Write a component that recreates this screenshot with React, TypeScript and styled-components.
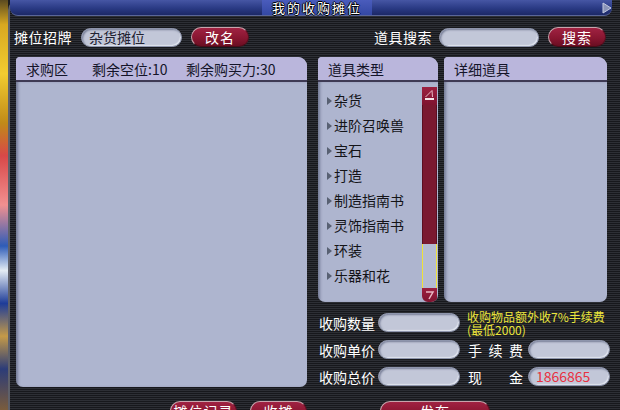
import styled, { createGlobalStyle } from "styled-components";

const GlobalStyle = createGlobalStyle`
  html, body {
    margin: 0;
    padding: 0;
    background: #1b1c21;
  }
  body {
    font-family: "Noto Sans CJK SC", "Noto Sans", sans-serif;
  }
`;

const Page = styled.div`
  display: flex;
  width: 620px;
  height: 410px;
  overflow: hidden;
`;

// strip of the game scene peeking out at the left
const SceneStrip = styled.div`
  width: 8px;
  flex: none;
  background: linear-gradient(
    180deg,
    #5a4a20 0%,
    #d8a820 6%,
    #f2cc30 18%,
    #c08a18 30%,
    #d84848 38%,
    #f29090 50%,
    #2e5cb8 60%,
    #e4ecf4 66%,
    #1e3c98 74%,
    #c49a48 82%,
    #2c3c78 90%,
    #7a5c3c 100%
  );
`;

const Frame = styled.div`
  flex: 1;
  display: flex;
  flex-direction: column;
  border-left: 2px solid #5e606a;
  border-top-left-radius: 10px;
  background: repeating-linear-gradient(
    180deg,
    #2d2f35 0px,
    #2d2f35 1px,
    #17181c 1px,
    #17181c 2px
  );
`;

const TitleBar = styled.div`
  height: 15px;
  margin-right: 8px;
  display: grid;
  grid-template-columns: 1fr auto 1fr;
  align-items: center;
  border-radius: 0 0 8px 8px;
  border-bottom: 1px solid #5a6698;
  background: linear-gradient(180deg, #4656a4 0%, #2a3a84 55%, #1c2866 100%);
  padding-left: 12px;
`;

const TitleBlock = styled.div`
  grid-column: 2;
  width: 110px;
  height: 15px;
  background: linear-gradient(180deg, #4a5cbc 0%, #3448a4 100%);
  color: #ffffff;
  font-size: 13px;
  line-height: 15px;
  letter-spacing: 2px;
  text-align: center;
  text-shadow: 1px 0 0 #000, -1px 0 0 #000, 0 1px 0 #000, 0 -1px 0 #000;
`;

const CornerIcon = styled.svg`
  grid-column: 3;
  justify-self: end;
`;

const TopRow = styled.div`
  display: flex;
  align-items: center;
  height: 20px;
  margin-top: 11px;
  padding: 0 14px 0 4px;
`;

const Label = styled.span`
  color: #ffffff;
  font-size: 14px;
  letter-spacing: 0.5px;
  white-space: nowrap;
`;

const SearchGroup = styled.div`
  display: flex;
  align-items: center;
  margin-left: auto;
`;

const Pill = styled.div<{ $width: number; $color?: string }>`
  width: ${({ $width }) => $width}px;
  height: 19px;
  box-sizing: border-box;
  border-radius: 10px;
  background: #c2c7d8;
  border: 1px solid #8e95ac;
  box-shadow: inset 1px 1px 2px #767d96, inset -1px -1px 1px #e6eaf2;
  color: ${({ $color }) => $color || "#222232"};
  font-size: 14px;
  line-height: 17px;
  padding-left: 7px;
  white-space: nowrap;
`;

const RedButton = styled.div<{ $width: number }>`
  width: ${({ $width }) => $width}px;
  height: 20px;
  box-sizing: border-box;
  flex: none;
  border-radius: 10px;
  background: linear-gradient(180deg, #a02242 0%, #86152f 60%, #6a0e22 100%);
  border: 1px solid #c8a4ac;
  border-bottom-color: #4a0c18;
  border-right-color: #5a1020;
  color: #ffffff;
  font-size: 14px;
  line-height: 18px;
  letter-spacing: 1px;
  text-align: center;
`;

const Main = styled.div`
  display: flex;
  margin-top: 10px;
  padding-left: 6px;
`;

const Panel = styled.div<{ $width: number; $height: number }>`
  width: ${({ $width }) => $width}px;
  height: ${({ $height }) => $height}px;
  flex: none;
  display: flex;
  flex-direction: column;
  overflow: hidden;
  border-radius: 4px 9px 7px 7px;
  background: #aeb5cf;
`;

const PanelHeader = styled.div`
  height: 23px;
  flex: none;
  display: flex;
  align-items: center;
  padding-left: 10px;
  background: #bab6dc;
  border-bottom: 2px solid #3e3a54;
  color: #141428;
  font-size: 14px;
  white-space: nowrap;
`;

const HeaderItem = styled.span<{ $width?: number }>`
  width: ${({ $width }) => ($width ? `${$width}px` : "auto")};
  flex: none;
`;

const PanelBody = styled.div`
  flex: 1;
  display: flex;
  box-shadow: inset 3px 0 3px -1px rgba(70, 74, 104, 0.55);
`;

const RightColumn = styled.div`
  display: flex;
  flex-direction: column;
  margin-left: 11px;
`;

const TopPanels = styled.div`
  display: flex;
  gap: 6px;
`;

const TypeList = styled.div`
  flex: 1;
  display: flex;
  flex-direction: column;
  padding-top: 5px;
`;

const TypeItem = styled.div`
  height: 25px;
  display: flex;
  align-items: center;
  gap: 2px;
  padding-left: 9px;
  color: #141418;
  font-size: 14px;
  white-space: nowrap;
`;

const Bullet = styled.span`
  width: 0;
  height: 0;
  border-left: 5px solid #586072;
  border-top: 4px solid transparent;
  border-bottom: 4px solid transparent;
  margin-top: 2px;
`;

const ScrollBar = styled.div`
  width: 15px;
  flex: none;
  display: flex;
  flex-direction: column;
  margin: 5px 1px 0 0;
`;

const ArrowButton = styled.div<{ $height: number; $down?: boolean }>`
  height: ${({ $height }) => $height}px;
  flex: none;
  display: flex;
  align-items: center;
  justify-content: center;
  background: linear-gradient(180deg, #9c2040 0%, #7e1430 100%);
  border-radius: ${({ $down }) => ($down ? "0 0 3px 6px" : "0")};
`;

const Track = styled.div`
  flex: 1;
  background: #7a1930;
  box-shadow: inset 1px 0 0 #5a0e20, inset -1px 0 0 #5a0e20;
`;

const Thumb = styled.div`
  height: 44px;
  flex: none;
  box-sizing: border-box;
  background: #b4bbd3;
  border-left: 1px solid #eee23a;
  border-right: 1px solid #eee23a;
`;

const Form = styled.div`
  display: grid;
  grid-template-columns: 60px 82px 68px 82px;
  grid-auto-rows: 19px;
  row-gap: 8px;
  margin-top: 11px;
`;

const FormLabel = styled.div`
  display: flex;
  align-items: center;
  padding-left: 1px;
  color: #ffffff;
  font-size: 14px;
  white-space: nowrap;
`;

const SpreadLabel = styled.div`
  width: 55px;
  margin-left: 8px;
  display: flex;
  align-items: center;
  justify-content: space-between;
  color: #ffffff;
  font-size: 14px;
`;

const Notice = styled.div`
  grid-column: 3 / span 2;
  margin: -3px 0 0 7px;
  color: #ece63c;
  font-size: 12px;
  line-height: 13px;
  white-space: nowrap;
`;

const NoticeLine = styled.div`
  height: 13px;
`;

const Footer = styled.div`
  display: flex;
  margin-top: 14px;
  padding-left: 160px;
`;

const FooterButton = styled(RedButton)<{ $gap: number }>`
  height: 22px;
  margin-left: ${({ $gap }) => $gap}px;
`;

const itemTypes = [
  "杂货",
  "进阶召唤兽",
  "宝石",
  "打造",
  "制造指南书",
  "灵饰指南书",
  "环装",
  "乐器和花",
];

const spread = (text: string) =>
  text.split("").map((ch, i) => <span key={i}>{ch}</span>);

export default function App() {
  return (
    <>
      <GlobalStyle />
      <Page>
        <SceneStrip />
        <Frame>
          <TitleBar>
            <TitleBlock>我的收购摊位</TitleBlock>
            <CornerIcon width="10" height="12" viewBox="0 0 10 12">
              <path d="M1 1 L9 6 L1 11 Z" fill="#8a94b8" stroke="#c4cae0" strokeWidth="1" />
            </CornerIcon>
          </TitleBar>

          <TopRow>
            <Label>摊位招牌</Label>
            <Pill $width={101} style={{ marginLeft: 9 }}>
              杂货摊位
            </Pill>
            <RedButton $width={58} style={{ marginLeft: 9 }}>
              改名
            </RedButton>
            <SearchGroup>
              <Label>道具搜索</Label>
              <Pill $width={100} style={{ marginLeft: 7 }} />
              <RedButton $width={58} style={{ marginLeft: 9 }}>
                搜索
              </RedButton>
            </SearchGroup>
          </TopRow>

          <Main>
            <Panel $width={291} $height={330}>
              <PanelHeader>
                <HeaderItem $width={66}>求购区</HeaderItem>
                <HeaderItem $width={94}>剩余空位:10</HeaderItem>
                <HeaderItem>剩余购买力:30</HeaderItem>
              </PanelHeader>
              <PanelBody />
            </Panel>

            <RightColumn>
              <TopPanels>
                <Panel $width={120} $height={245}>
                  <PanelHeader>道具类型</PanelHeader>
                  <PanelBody>
                    <TypeList>
                      {itemTypes.map((name) => (
                        <TypeItem key={name}>
                          <Bullet />
                          {name}
                        </TypeItem>
                      ))}
                    </TypeList>
                    <ScrollBar>
                      <ArrowButton $height={18}>
                        <svg width="15" height="18" viewBox="0 0 15 18">
                          <path d="M3.5 10 L10 3.5 L10.5 10" fill="none" stroke="#e8b8c4" strokeWidth="1" />
                          <rect x="3" y="11" width="9" height="2" fill="#f4e4e8" />
                        </svg>
                      </ArrowButton>
                      <Track />
                      <Thumb />
                      <ArrowButton $height={14} $down>
                        <svg width="15" height="14" viewBox="0 0 15 14">
                          <path d="M4 4 H11 L7 11" fill="none" stroke="#e8b8c4" strokeWidth="1.5" />
                        </svg>
                      </ArrowButton>
                    </ScrollBar>
                  </PanelBody>
                </Panel>
                <Panel $width={163} $height={245}>
                  <PanelHeader>详细道具</PanelHeader>
                  <PanelBody />
                </Panel>
              </TopPanels>

              <Form>
                <FormLabel>收购数量</FormLabel>
                <Pill $width={82} />
                <Notice>
                  <NoticeLine>收购物品额外收7%手续费</NoticeLine>
                  <NoticeLine>(最低2000)</NoticeLine>
                </Notice>

                <FormLabel>收购单价</FormLabel>
                <Pill $width={82} />
                <SpreadLabel>{spread("手续费")}</SpreadLabel>
                <Pill $width={82} />

                <FormLabel>收购总价</FormLabel>
                <Pill $width={82} />
                <SpreadLabel>{spread("现金")}</SpreadLabel>
                <Pill $width={82} $color="#e83040">
                  1866865
                </Pill>
              </Form>
            </RightColumn>
          </Main>

          <Footer>
            <FooterButton $width={67} $gap={0}>
              摊位记录
            </FooterButton>
            <FooterButton $width={57} $gap={13}>
              收摊
            </FooterButton>
            <FooterButton $width={110} $gap={73}>
              发布
            </FooterButton>
          </Footer>
        </Frame>
      </Page>
    </>
  );
}
